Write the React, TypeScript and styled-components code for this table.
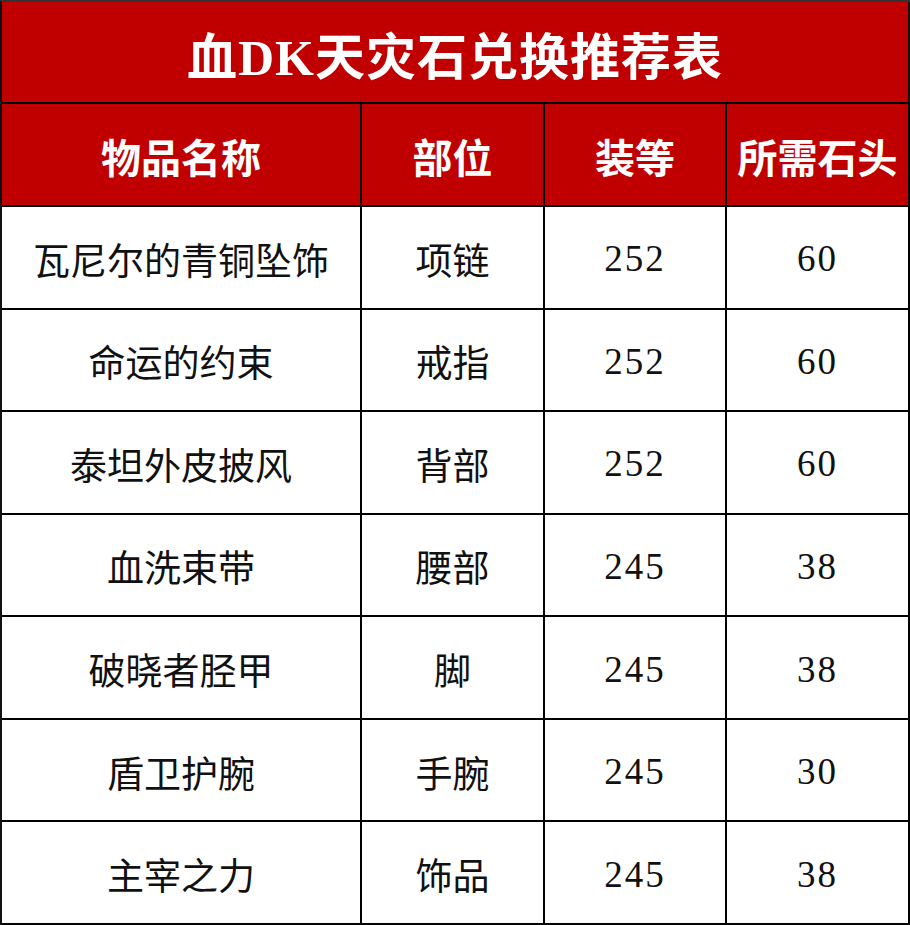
import styled, { createGlobalStyle } from 'styled-components';

const GlobalStyle = createGlobalStyle`
  html, body {
    margin: 0;
    padding: 0;
    background: #ffffff;
  }
  * {
    box-sizing: border-box;
  }
`;

const Table = styled.div`
  width: 910px;
  height: 925px;
  display: grid;
  grid-template-columns: 360px 183px 182px 183px;
  grid-template-rows: 102px 103px repeat(7, 1fr);
  border-top: 2px solid #333;
  border-left: 2px solid #111;
  font-family: 'Liberation Serif', 'Noto Sans CJK SC', serif;
`;

const Title = styled.div`
  grid-column: 1 / -1;
  display: flex;
  align-items: center;
  justify-content: center;
  padding-top: 2px;
  background: #c00000;
  color: #ffffff;
  font-size: 50px;
  font-weight: 700;
  border-right: 2px solid #111;
  border-bottom: 2px solid #000;
  letter-spacing: 1px;
`;

const Cell = styled.div<{ $head?: boolean; $num?: boolean }>`
  display: flex;
  align-items: center;
  justify-content: center;
  padding-top: 3px;
  border-right: 2px solid #000;
  border-bottom: 2px solid #000;
  background: ${(p) => (p.$head ? '#c00000' : '#ffffff')};
  color: ${(p) => (p.$head ? '#ffffff' : '#111111')};
  font-size: ${(p) => (p.$head ? '40px' : '37px')};
  font-weight: ${(p) => (p.$head ? 700 : 400)};
  letter-spacing: ${(p) => (p.$num ? '2px' : '0')};
  white-space: nowrap;
`;

const headers = ['物品名称', '部位', '装等', '所需石头'];

const rows = [
  ['瓦尼尔的青铜坠饰', '项链', '252', '60'],
  ['命运的约束', '戒指', '252', '60'],
  ['泰坦外皮披风', '背部', '252', '60'],
  ['血洗束带', '腰部', '245', '38'],
  ['破晓者胫甲', '脚', '245', '38'],
  ['盾卫护腕', '手腕', '245', '30'],
  ['主宰之力', '饰品', '245', '38'],
];

const App = () => {
  return (
    <>
      <GlobalStyle />
      <Table>
        <Title>血DK天灾石兑换推荐表</Title>
        {headers.map((h) => (
          <Cell $head key={h}>
            {h}
          </Cell>
        ))}
        {rows.map((row, i) =>
          row.map((text, j) => (
            <Cell key={`${i}-${j}`} $num={j >= 2}>
              {text}
            </Cell>
          ))
        )}
      </Table>
    </>
  );
};

export default App;
